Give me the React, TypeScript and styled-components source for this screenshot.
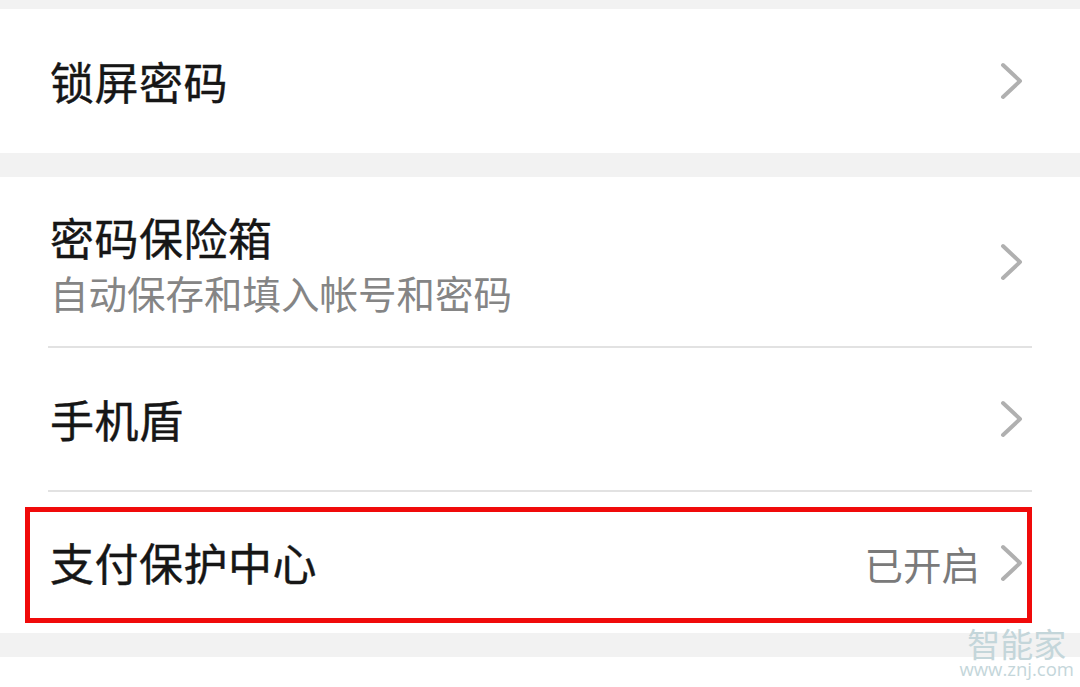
import React from "react";
import styled, { createGlobalStyle } from "styled-components";

const Global = createGlobalStyle`
  html, body { margin: 0; padding: 0; background: #f2f2f2; }
  body { font-family: "Noto Sans CJK SC", "Noto Sans", sans-serif; }
`;

const Page = styled.div`
  position: relative;
  width: 1080px;
  height: 687px;
  overflow: hidden;
  background: #f2f2f2;
  display: flex;
  flex-direction: column;
  padding-top: 9px;
  box-sizing: border-box;
  gap: 24px;
`;

const Card = styled.div<{ $grow?: boolean }>`
  background: #ffffff;
  display: flex;
  flex-direction: column;
  flex-shrink: 0;
  flex-grow: ${(p) => (p.$grow ? 1 : 0)};
`;

const Row = styled.div<{ $h: number }>`
  position: relative;
  height: ${(p) => p.$h}px;
  display: flex;
  align-items: center;
  padding: 0 56px 0 50px;
  box-sizing: border-box;
`;

const TextCol = styled.div<{ $offset?: number }>`
  flex: 1;
  display: flex;
  flex-direction: column;
  padding-top: ${(p) => p.$offset ?? 0}px;
`;

const Title = styled.div`
  font-size: 44px;
  line-height: 55px;
  font-weight: 400;
  color: #161616;
  letter-spacing: 0.5px;
  -webkit-text-stroke: 0.4px #161616;
`;

const Sub = styled.div`
  font-size: 38.5px;
  line-height: 55px;
  color: #858585;
`;

const Status = styled.div`
  font-size: 38.5px;
  color: #7a7a7a;
  margin-right: 20px;
`;

const Divider = styled.div`
  height: 2px;
  background: #e2e2e2;
  margin: 0 48px;
`;

const Highlight = styled.div`
  position: absolute;
  left: 25px;
  right: 48px;
  top: 15px;
  bottom: 10px;
  border: 5px solid #f00a0a;
  pointer-events: none;
`;

const Watermark = styled.div`
  position: absolute;
  right: 6px;
  bottom: 9px;
  display: flex;
  flex-direction: column;
  align-items: center;
  gap: 1px;
  color: #c4d6da;
`;

const WmBig = styled.div`
  font-family: "Noto Sans CJK SC", "Noto Sans", sans-serif;
  font-size: 33px;
  line-height: 32px;
`;

const WmSmall = styled.div`
  font-family: "Open Sans", "Noto Sans", sans-serif;
  font-size: 18.5px;
  line-height: 18px;
`;

const Chevron = () => (
  <svg width="24" height="38" viewBox="0 0 24 38" style={{ flexShrink: 0 }}>
    <polyline
      points="3,3 20,19 3,35"
      fill="none"
      stroke="#b0b0b0"
      strokeWidth="4"
      strokeLinecap="round"
      strokeLinejoin="round"
    />
  </svg>
);

export default function App() {
  return (
    <>
      <Global />
      <Page>
        <Card>
          <Row $h={144}>
            <TextCol>
              <Title>锁屏密码</Title>
            </TextCol>
            <Chevron />
          </Row>
        </Card>
        <Card>
          <Row $h={169}>
            <TextCol $offset={6}>
              <Title>密码保险箱</Title>
              <Sub>自动保存和填入帐号和密码</Sub>
            </TextCol>
            <Chevron />
          </Row>
          <Divider />
          <Row $h={142}>
            <TextCol>
              <Title>手机盾</Title>
            </TextCol>
            <Chevron />
          </Row>
          <Divider />
          <Row $h={141}>
            <TextCol>
              <Title>支付保护中心</Title>
            </TextCol>
            <Status>已开启</Status>
            <Chevron />
            <Highlight />
          </Row>
        </Card>
        <Card $grow />
        <Watermark>
          <WmBig>智能家</WmBig>
          <WmSmall>www.znj.com</WmSmall>
        </Watermark>
      </Page>
    </>
  );
}
